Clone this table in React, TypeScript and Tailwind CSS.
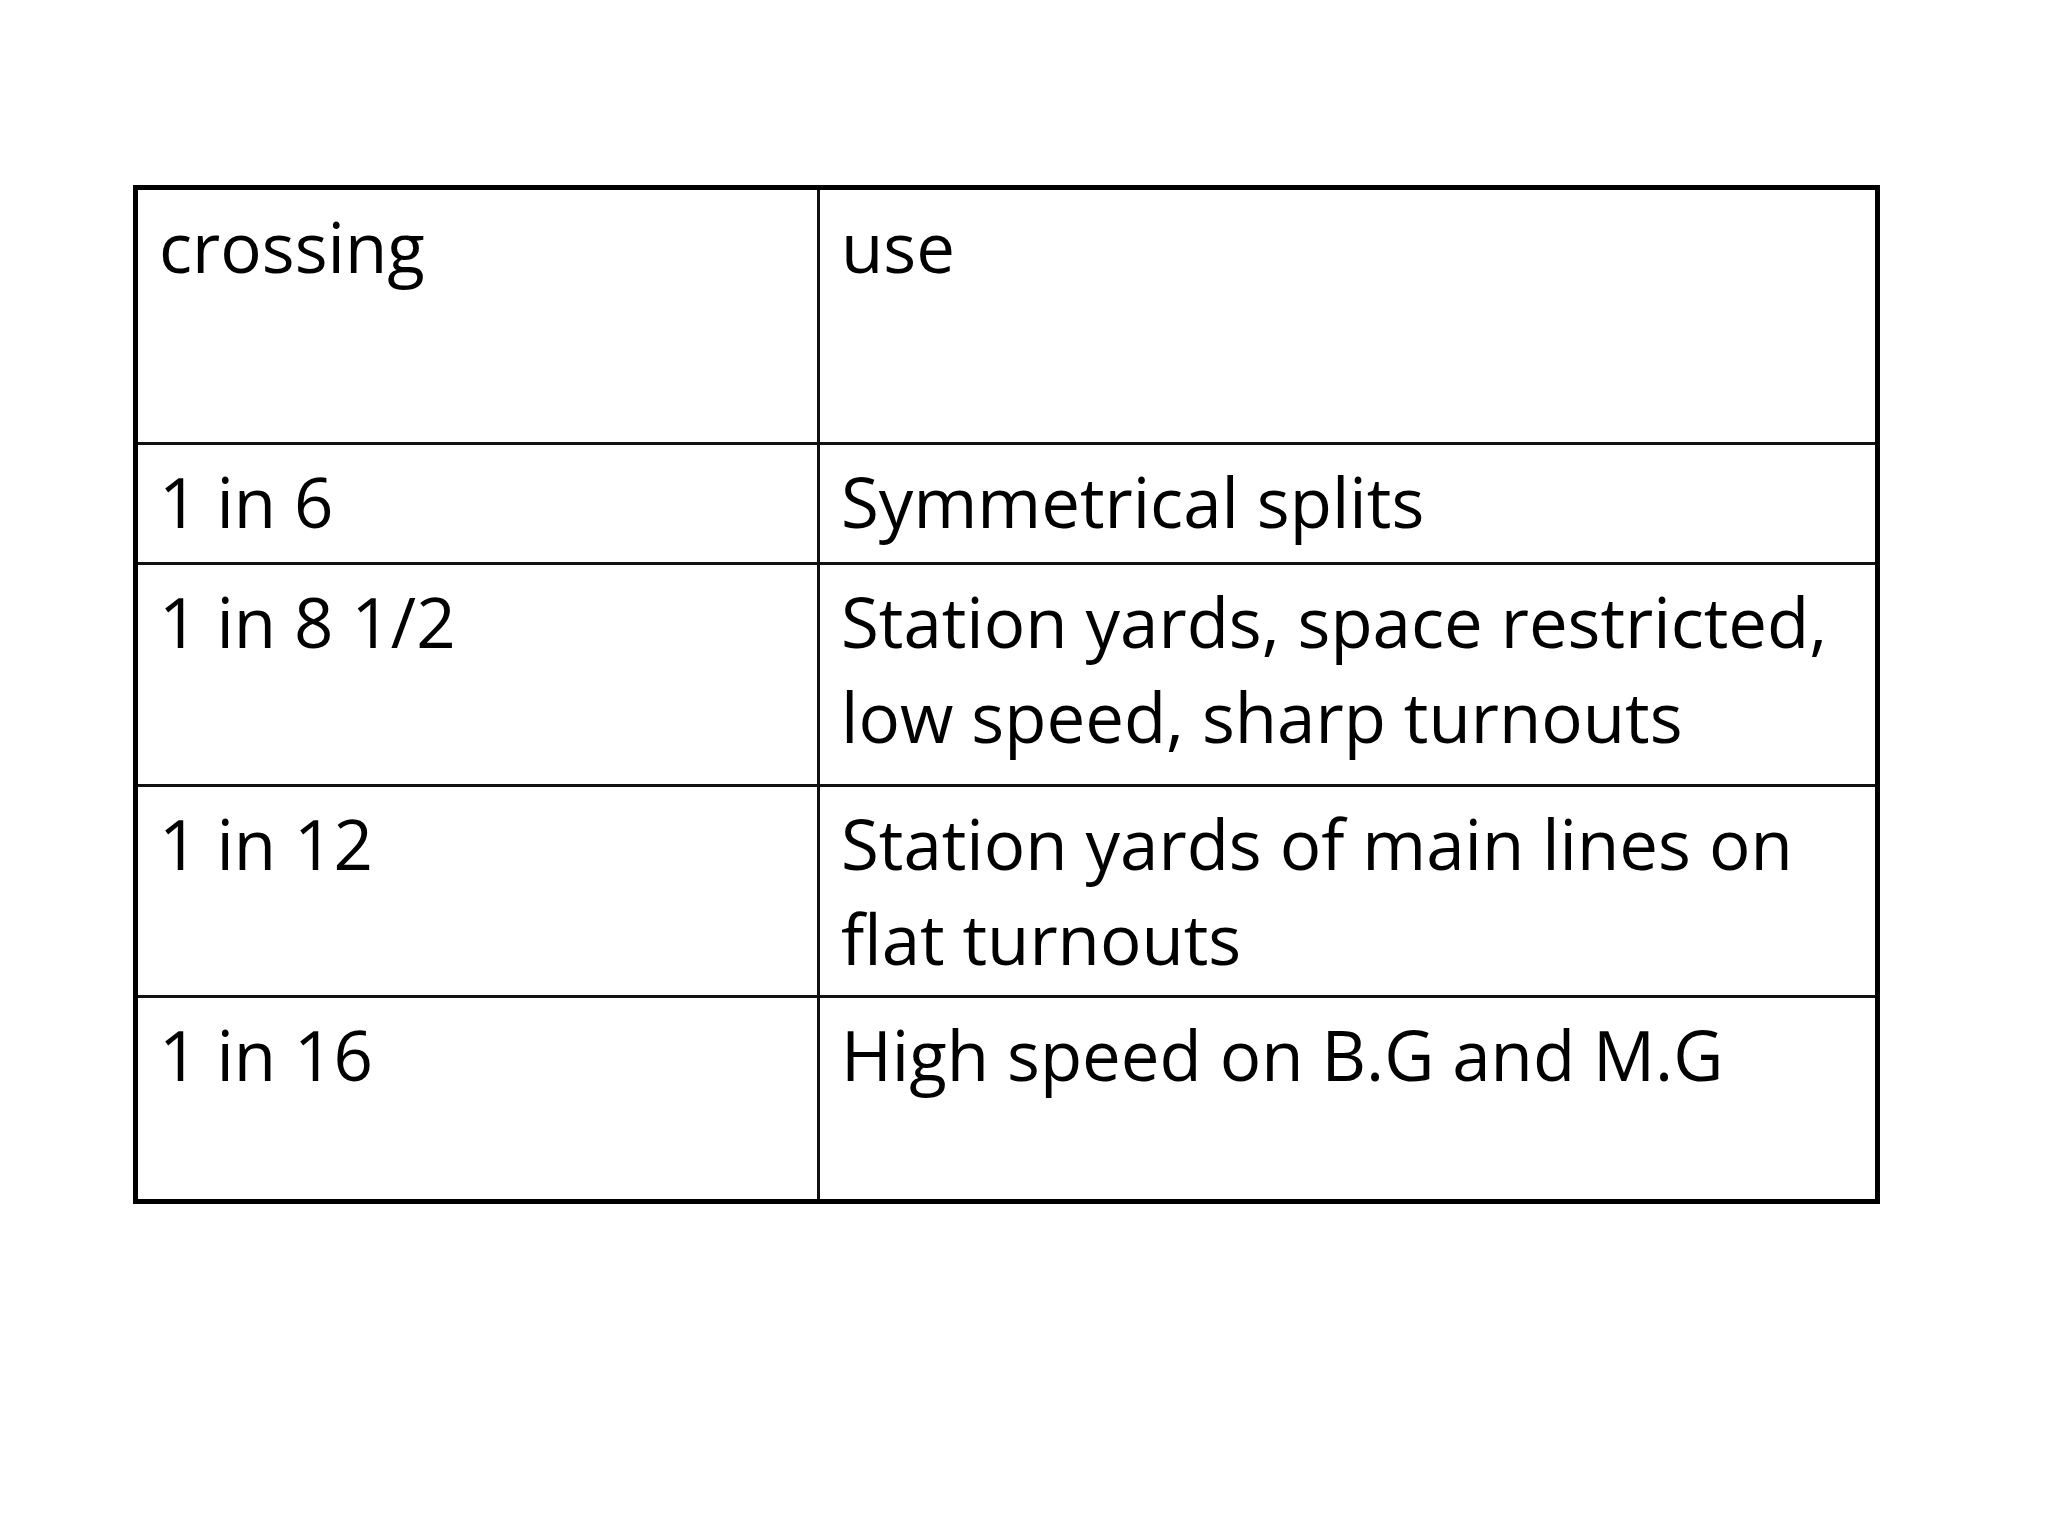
const rows = [
  { crossing: 'crossing', use: ['use'], h: 'h-[255px]' },
  { crossing: '1 in 6', use: ['Symmetrical splits'], h: 'h-[120px]' },
  { crossing: '1 in 8 1/2', use: ['Station yards, space restricted,', 'low speed, sharp turnouts'], h: 'h-[222px]' },
  { crossing: '1 in 12', use: ['Station yards of main lines on', 'flat turnouts'], h: 'h-[211px]' },
  { crossing: '1 in 16', use: ['High speed on B.G and M.G'], h: 'h-[201px]' },
];

export default function App() {
  return (
    <div className="w-[2048px] h-[1536px] bg-white overflow-hidden pt-[185px] pl-[133px] font-['Open_Sans',sans-serif] font-medium text-black">
      <div className="w-[1747px] border-[5px] border-black">
        {rows.map((r, i) => (
          <div
            key={r.crossing}
            className={`grid grid-cols-[682px_1fr] ${r.h} ${i < rows.length - 1 ? 'border-b-[3px] border-[#111]' : ''}`}
          >
            <div className="border-r-[3px] border-[#111] pl-[21px] pt-[9px] text-[69px] leading-[95px]">
              {r.crossing}
            </div>
            <div className="pl-[21px] pt-[9px] text-[69px] leading-[95px]">
              {r.use.map((l) => (
                <div key={l}>{l}</div>
              ))}
            </div>
          </div>
        ))}
      </div>
    </div>
  );
}
